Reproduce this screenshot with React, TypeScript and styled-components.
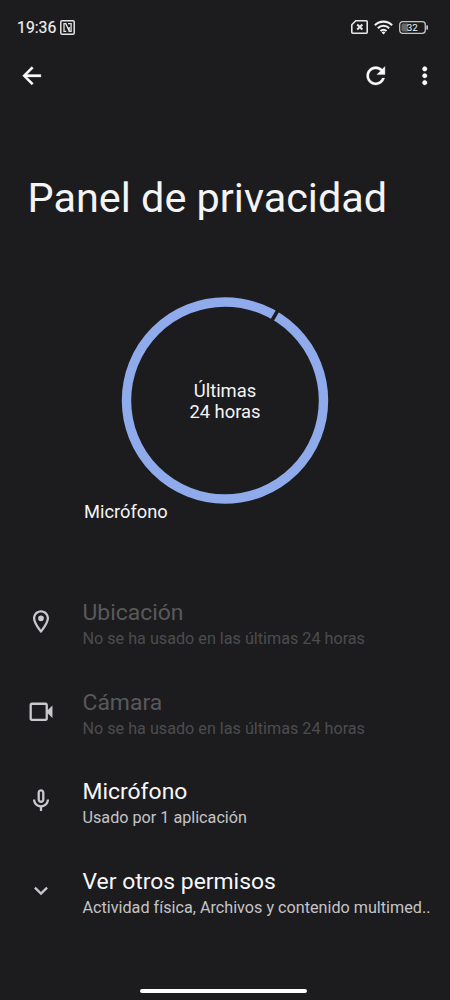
import React from 'react';
import styled, { createGlobalStyle } from 'styled-components';

const GlobalStyle = createGlobalStyle`
  * { box-sizing: border-box; }
  body {
    margin: 0;
    background: #1c1c1e;
    font-family: Roboto, "Liberation Sans", sans-serif;
  }
`;

const Screen = styled.div`
  display: flex;
  flex-direction: column;
  width: 450px;
  height: 1000px;
  overflow: hidden;
  background: #1c1c1e;
  color: #f4f4f6;
  svg { display: block; flex: none; }
`;

const StatusBar = styled.header`
  display: flex;
  align-items: center;
  justify-content: space-between;
  height: 54px;
  padding: 0 21.5px 0 17px;
`;

const StatusGroup = styled.div<{ $gap: number }>`
  display: flex;
  align-items: center;
  gap: ${({ $gap }) => $gap}px;
`;

const Clock = styled.span`
  width: 39px;
  padding-top: 1px;
  font-size: 15.8px;
  font-weight: 400;
  line-height: 20px;
  color: #f0f0f2;
  -webkit-text-stroke: 0.15px #f0f0f2;
`;

const Toolbar = styled.nav`
  display: flex;
  align-items: center;
  height: 43px;
  padding: 0 11.8px 0 18px;
`;

const IconButton = styled.button<{ $push?: boolean; $after?: number }>`
  display: flex;
  padding: 0;
  border: 0;
  background: none;
  color: #fafafa;
  stroke: #fafafa;
  stroke-width: 0.3px;
  margin-left: ${({ $push }) => ($push ? 'auto' : '0')};
  margin-right: ${({ $after = 0 }) => $after}px;
`;

const PageTitle = styled.h1`
  margin: 76.5px 0 0 27.5px;
  font-size: 41.4px;
  font-weight: 400;
  line-height: 48px;
  white-space: nowrap;
`;

const Usage = styled.section`
  display: flex;
  flex-direction: column;
  height: 282.65px;
  margin-top: 75px;
`;

const Ring = styled.div`
  display: grid;
  place-items: center;
  align-self: center;
  width: 208px;
  height: 208px;
  > * { grid-area: 1 / 1; }
`;

const RingCaption = styled.p`
  margin: 1.4px 0 0;
  font-size: 18.4px;
  line-height: 21.5px;
  text-align: center;
`;

const Legend = styled.span`
  margin: -4px 0 0 84px;
  font-size: 18.3px;
  line-height: 22px;
`;

const List = styled.ul`
  margin: 0;
  padding: 0;
  list-style: none;
`;

const Row = styled.li`
  display: grid;
  grid-template-columns: 28px 1fr;
  column-gap: 27.5px;
  align-items: center;
  height: 89.6px;
  padding-left: 27px;
  color: #c8c8ce;
  > svg { width: 28px; margin-bottom: 4px; }
`;

const RowText = styled.div<{ $disabled?: boolean }>`
  color: ${({ $disabled }) => ($disabled ? '#4c4c4e' : '#c4c4c8')};
  white-space: nowrap;
`;

const RowTitle = styled.div<{ $disabled?: boolean }>`
  font-size: 22.9px;
  line-height: 28px;
  color: ${({ $disabled }) => ($disabled ? '#59595b' : '#f7f7f9')};
`;

const RowSummary = styled.div`
  margin-top: 2px;
  font-size: 16.18px;
  line-height: 20px;
`;

const HomeIndicator = styled.div`
  width: 167px;
  height: 4px;
  margin: auto auto 7px 140px;
  border-radius: 2px;
  background: #fff;
`;

const MaterialIcon = ({ d }: { d: string }) => (
  <svg width="27.5" height="27.5" viewBox="0 0 24 24" fill="currentColor">
    <path d={d} />
  </svg>
);

const icons = {
  back: 'M20 11H7.83l5.59-5.59L12 4l-8 8 8 8 1.41-1.41L7.83 13H20v-2z',
  refresh:
    'M17.65 6.35C16.2 4.9 14.21 4 12 4c-4.42 0-7.99 3.58-7.99 8s3.57 8 7.99 8c3.73 0 6.84-2.55 7.73-6h-2.08c-.82 2.33-3.04 4-5.65 4-3.31 0-6-2.69-6-6s2.69-6 6-6c1.66 0 3.14.69 4.22 1.78L13 11h7V4l-2.35 2.35z',
  more: 'M12 8c1.1 0 2-.9 2-2s-.9-2-2-2-2 .9-2 2 .9 2 2 2zm0 2c-1.1 0-2 .9-2 2s.9 2 2 2 2-.9 2-2-.9-2-2-2zm0 6c-1.1 0-2 .9-2 2s.9 2 2 2 2-.9 2-2-.9-2-2-2z',
  place:
    'M12 2C8.13 2 5 5.13 5 9c0 5.25 7 13 7 13s7-7.75 7-13c0-3.87-3.13-7-7-7zM7 9c0-2.76 2.24-5 5-5s5 2.24 5 5c0 2.88-2.88 7.19-5 9.88C9.92 16.21 7 11.85 7 9zM12 6.5a2.5 2.5 0 1 0 0 5 2.5 2.5 0 0 0 0-5z',
  camera:
    'M18 10.48V6c0-1.1-.9-2-2-2H4c-1.1 0-2 .9-2 2v12c0 1.1.9 2 2 2h12c1.1 0 2-.9 2-2v-4.48l4 3.98v-11l-4 3.98zM16 18H4V6h12v12z',
  mic: 'M12 14c1.66 0 3-1.34 3-3V5c0-1.66-1.34-3-3-3S9 3.34 9 5v6c0 1.66 1.34 3 3 3zm-1-9c0-.55.45-1 1-1s1 .45 1 1v6c0 .55-.45 1-1 1s-1-.45-1-1V5zm6 6c0 2.76-2.24 5-5 5s-5-2.24-5-5H5c0 3.53 2.61 6.43 6 6.92V21h2v-3.08c3.39-.49 6-3.39 6-6.92h-2z',
  expand: 'M16.59 8.59L12 13.17 7.41 8.59 6 10l6 6 6-6-1.41-1.41z',
};

const NfcIcon = () => (
  <svg width="15" height="15" viewBox="0 0 15 15" fill="none" stroke="#e4e4e6" strokeWidth="1.5">
    <rect x="0.8" y="0.8" width="13.4" height="13.4" rx="1.3" />
    <path d="M6.3 11.4H4V3.7h1.8l3.4 7.4M8 3.7h3.1v7.6H9.2V7" strokeWidth="1.3" />
  </svg>
);

const SimIcon = () => (
  <svg width="17" height="14" viewBox="0 0 17 14" fill="none" stroke="#e8e8ea" strokeWidth="1.6">
    <path d="M4.8.8h10.4a1 1 0 0 1 1 1v10.4a1 1 0 0 1-1 1H1.8a1 1 0 0 1-1-1V4.8z" />
    <path d="M6.2 4.5l5.2 5M11.4 4.5l-5.2 5" strokeWidth="2" />
  </svg>
);

const WifiIcon = () => (
  <svg width="19" height="15" viewBox="0 0 19 15" fill="none" stroke="#f0f0f2" strokeWidth="2.1">
    <path d="M.9 5.2a12.2 12.2 0 0 1 17.2 0M3.8 8.2a8 8 0 0 1 11.4 0M6.5 11a4.3 4.3 0 0 1 6 0" />
    <path d="M7.6 12.4a2.8 2.8 0 0 1 3.8 0L9.5 14.4z" fill="#f0f0f2" stroke="none" />
  </svg>
);

const BatteryIcon = () => (
  <svg width="29.5" height="13" viewBox="0 0 29.5 13">
    <rect x="0.7" y="0.7" width="25.6" height="11.6" rx="3" fill="none" stroke="#c6c6c8" strokeWidth="1.3" />
    <path d="M4 2.5h5v8H4a1.5 1.5 0 0 1-1.5-1.5V4A1.5 1.5 0 0 1 4 2.5z" fill="#68686b" />
    <rect x="27.3" y="4.3" width="1.7" height="4.4" rx="0.7" fill="#c6c6c8" />
    <text x="13.3" y="10" textAnchor="middle" fontFamily="Roboto" fontSize="9.8" fill="#f4f4f6">32</text>
  </svg>
);

const UsageRing = () => (
  <svg width="208" height="208" viewBox="-104 -104 208 208">
    <circle cy="-0.5" r="98.5" fill="none" stroke="#8fabec" strokeWidth="9.4" />
    <path d="M0-106v16" stroke="#1c1c1e" strokeWidth="3.6" transform="translate(0 -0.5) rotate(30.4)" />
  </svg>
);

const permissions = [
  { icon: icons.place, title: 'Ubicación', summary: 'No se ha usado en las últimas 24 horas', disabled: true },
  { icon: icons.camera, title: 'Cámara', summary: 'No se ha usado en las últimas 24 horas', disabled: true },
  { icon: icons.mic, title: 'Micrófono', summary: 'Usado por 1 aplicación' },
  { icon: icons.expand, title: 'Ver otros permisos', summary: 'Actividad física, Archivos y contenido multimed..' },
];

export default function App() {
  return (
    <Screen>
      <GlobalStyle />
      <StatusBar>
        <StatusGroup $gap={3.5}>
          <Clock>19:36</Clock>
          <NfcIcon />
        </StatusGroup>
        <StatusGroup $gap={6}>
          <SimIcon />
          <WifiIcon />
          <BatteryIcon />
        </StatusGroup>
      </StatusBar>
      <Toolbar>
        <IconButton aria-label="Atrás"><MaterialIcon d={icons.back} /></IconButton>
        <IconButton aria-label="Actualizar" $push $after={21}><MaterialIcon d={icons.refresh} /></IconButton>
        <IconButton aria-label="Más opciones"><MaterialIcon d={icons.more} /></IconButton>
      </Toolbar>
      <PageTitle>Panel de privacidad</PageTitle>
      <Usage>
        <Ring>
          <UsageRing />
          <RingCaption>Últimas<br />24 horas</RingCaption>
        </Ring>
        <Legend>Micrófono</Legend>
      </Usage>
      <List>
        {permissions.map(({ icon, title, summary, disabled }) => (
          <Row key={title}>
            <MaterialIcon d={icon} />
            <RowText $disabled={disabled}>
              <RowTitle $disabled={disabled}>{title}</RowTitle>
              <RowSummary>{summary}</RowSummary>
            </RowText>
          </Row>
        ))}
      </List>
      <HomeIndicator />
    </Screen>
  );
}
